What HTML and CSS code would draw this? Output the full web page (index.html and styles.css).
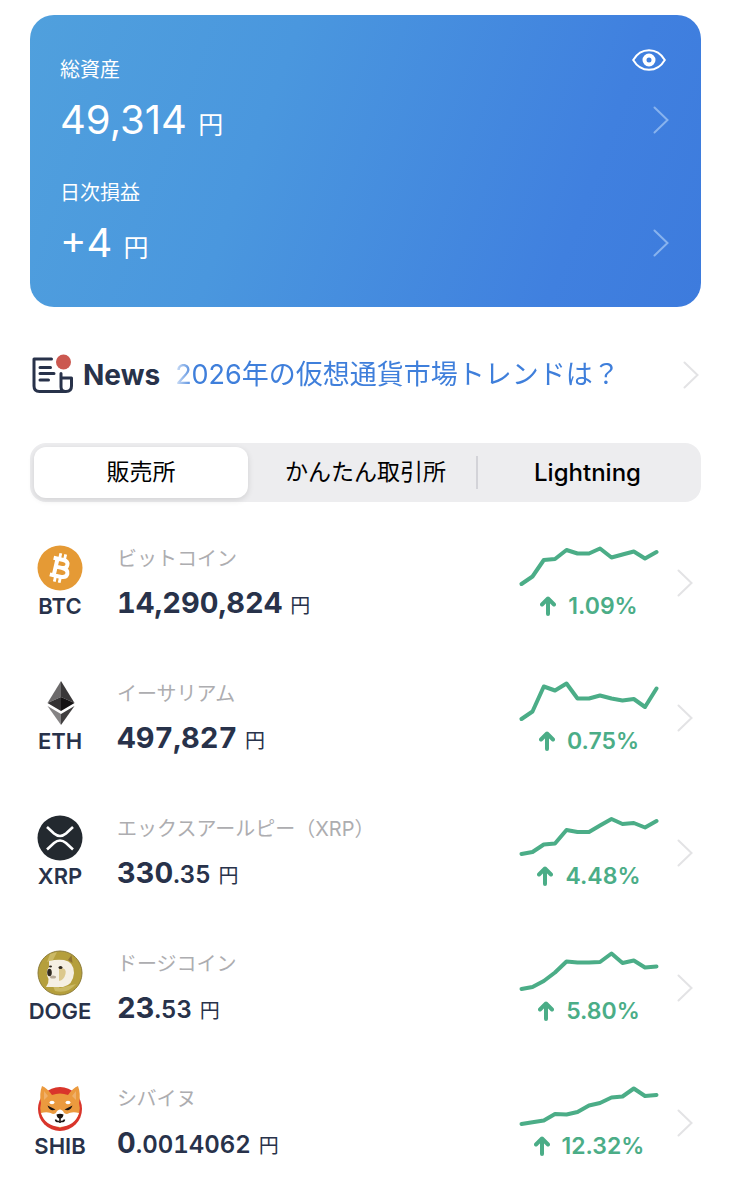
FILE: index.html
```html
<!DOCTYPE html>
<html lang="ja">
<head>
<meta charset="utf-8">
<meta name="viewport" content="width=device-width, initial-scale=1">
<title>販売所</title>
<link rel="stylesheet" href="styles.css">
</head>
<body>
<svg class="defs" aria-hidden="true">
  <symbol id="chevron" viewBox="0 0 16 28"><path d="M1.5 1.5 14.5 14 1.5 26.5"/></symbol>
  <symbol id="up" viewBox="0 0 16 20"><path d="M8 18V2.500M2 8.500 8 2.500l6 6"/></symbol>
</svg>
<main class="page">
  <section class="card">
    <button class="eye" type="button" aria-label="資産の表示切替">
      <svg viewBox="0 0 34 22"><path class="eye-line" d="M1.200 11C5 4.500 10.500 1.200 17 1.200S29 4.500 32.800 11C29 17.500 23.500 20.800 17 20.800S5 17.500 1.200 11Z"/><circle class="eye-ring" cx="17" cy="11" r="4.500"/></svg>
    </button>
    <a class="asset" href="#assets">
      <span class="asset-label">総資産</span>
      <span class="asset-row"><span class="asset-value">49,314 <small>円</small></span><svg class="chevron"><use href="#chevron"/></svg></span>
    </a>
    <a class="asset" href="#daily">
      <span class="asset-label">日次損益</span>
      <span class="asset-row"><span class="asset-value">+4 <small>円</small></span><svg class="chevron"><use href="#chevron"/></svg></span>
    </a>
  </section>

  <a class="news" href="#news">
    <svg class="news-icon" viewBox="0 0 44 44" aria-hidden="true">
      <path class="news-lines" d="M21.500 6H4V33Q4 38.500 9.500 38.500H36Q41.500 38.500 41.500 33V25H31M31 20.500V34Q31 38.500 35.500 38.500M10 14.500H20.500M10 20.500H24M10 27H18.500"/>
      <circle class="news-dot" cx="33.500" cy="9" r="7.500"/>
    </svg>
    <strong class="news-title">News</strong>
    <span class="news-text">2026年の仮想通貨市場トレンドは？</span>
    <svg class="chevron"><use href="#chevron"/></svg>
  </a>

  <div class="tabs" role="radiogroup" aria-label="取引方法">
    <label class="tab"><input type="radio" name="market" checked><span>販売所</span></label>
    <label class="tab"><input type="radio" name="market"><span>かんたん取引所</span></label>
    <label class="tab"><input type="radio" name="market"><span lang="en">Lightning</span></label>
  </div>

  <ul class="coins">
    <li><a class="coin" href="#btc">
      <span class="coin-id"><svg class="coin-icon" viewBox="0 0 46 46" aria-hidden="true"><circle cx="23" cy="23" r="22.500" fill="#e59a35"/><g transform="rotate(13 23 23)" fill="none" stroke="#fff"><path stroke-width="4" d="M18.500 14V32M14.500 14.500H24.500Q29.500 14.500 29.500 18.500T24.500 22.500H19M24.500 22.500Q31.500 22.500 31.500 27T25 31.500H14.500"/><path stroke-width="2.800" d="M20.500 8.500V15M25.500 8.500V15M20.500 31V37.500M25.500 31V37.500"/></g></svg><b>BTC</b></span>
      <span class="coin-info"><span class="coin-name">ビットコイン</span><span class="price">14,290,824 <small>円</small></span></span>
      <span class="trend"><svg class="spark" viewBox="0 0 140 42" aria-hidden="true"><path d="M2.500 39 13.500 31.500 24.800 15 36 14 47.500 5 58.500 8.500H70L81 3.500 92.500 12.500 103.500 9.500 114.800 6.500 126 13.500 137.500 7"/></svg><span class="change"><svg class="up"><use href="#up"/></svg>1.09%</span></span>
      <svg class="chevron"><use href="#chevron"/></svg>
    </a></li>
    <li><a class="coin" href="#eth">
      <span class="coin-id"><svg class="coin-icon" viewBox="0 0 46 46" aria-hidden="true"><path fill="#6c6a6b" d="M24 1 10.500 23 24 17Z"/><path fill="#3a3839" d="M24 1 37.500 23 24 17Z"/><path fill="#343233" d="M10.500 23 24 17V31Z"/><path fill="#151314" d="M37.500 23 24 17V31Z"/><path fill="#858384" d="M10.500 26 24 34V45Z"/><path fill="#403e3f" d="M37.500 26 24 34V45Z"/></svg><b>ETH</b></span>
      <span class="coin-info"><span class="coin-name">イーサリアム</span><span class="price">497,827 <small>円</small></span></span>
      <span class="trend"><svg class="spark" viewBox="0 0 140 42" aria-hidden="true"><path d="M2.500 39 13.500 31.500 24.800 6.500 36 10.500 47.500 3.500 58.500 18.500H70L81 15.500 92.500 18.500 103.500 20.500 114.800 19 126 27 137.500 8.500"/></svg><span class="change"><svg class="up"><use href="#up"/></svg>0.75%</span></span>
      <svg class="chevron"><use href="#chevron"/></svg>
    </a></li>
    <li><a class="coin" href="#xrp">
      <span class="coin-id"><svg class="coin-icon" viewBox="0 0 46 46" aria-hidden="true"><circle cx="23" cy="23" r="22.500" fill="#23292f"/><path fill="none" stroke="#fff" stroke-width="2.600" d="M10 12 17 18.500Q23 23.500 29 18.500L36 12M10 34.500 17 28Q23 23 29 28L36 34.500"/></svg><b>XRP</b></span>
      <span class="coin-info"><span class="coin-name">エックスアールピー（XRP）</span><span class="price">330<i>.35</i> <small>円</small></span></span>
      <span class="trend"><svg class="spark" viewBox="0 0 140 42" aria-hidden="true"><path d="M2.500 39 13.500 37 24.800 29.500 36 28.500 47.500 15 58.500 17H70L81 10.500 92.500 4 103.500 9 114.800 8 126 12.500 137.500 6"/></svg><span class="change"><svg class="up"><use href="#up"/></svg>4.48%</span></span>
      <svg class="chevron"><use href="#chevron"/></svg>
    </a></li>
    <li><a class="coin" href="#doge">
      <span class="coin-id"><svg class="coin-icon" viewBox="0 0 46 46" aria-hidden="true"><circle cx="23" cy="23" r="22" fill="#b59f3c" stroke="#8d7c39"/><path fill="#cbb965" d="M14 31 23 38 39 34Q31 44 18 41ZM13 4 20 2 16 10 10 12Z"/><path fill="#8f7233" d="M31 10 34.500 5 35.500 13Z"/><path fill="#f5efe3" d="M12 11Q20 9 27 10Q37 12 37 23Q36 35 26 37H9Q12 33 11.500 29Q8 22 12 17Z"/><path fill="#dcc88c" d="M22 18Q30 17 28.500 24Q27 30 22 31Z"/><ellipse cx="12.500" cy="22.500" rx="2.300" ry="3.800" fill="#30291f"/><ellipse cx="16" cy="27" rx="3" ry="1.500" fill="#b8aa98"/><ellipse cx="13.500" cy="16.500" rx="1.500" ry="1" fill="#30291f"/><ellipse cx="23.500" cy="17.500" rx="2" ry="1.500" fill="#30291f"/></svg><b>DOGE</b></span>
      <span class="coin-info"><span class="coin-name">ドージコイン</span><span class="price">23<i>.53</i> <small>円</small></span></span>
      <span class="trend"><svg class="spark" viewBox="0 0 140 42" aria-hidden="true"><path d="M2.500 39 13.500 37 24.800 31 36 22.500 47.500 11.500 58.500 12.500H70L81 12 92.500 3.500 103.500 13 114.800 10.500 126 17.500 137.500 16.500"/></svg><span class="change"><svg class="up"><use href="#up"/></svg>5.80%</span></span>
      <svg class="chevron"><use href="#chevron"/></svg>
    </a></li>
    <li><a class="coin" href="#shib">
      <span class="coin-id"><svg class="coin-icon" viewBox="0 0 46 46" aria-hidden="true"><circle cx="23" cy="24" r="22" fill="#d9352b"/><path fill="#eb9a3e" d="M5 1Q10 3 15 10Q23 7 31 10Q36 3 41 1Q44 9 42 18Q45 29 37 36L23 43 9 36Q1 29 4 18Q2 9 5 1Z"/><path fill="#f0b06a" d="M7 6 11 11 7 15ZM39 6 35 11 39 15Z"/><path fill="#fff" d="M4 28Q11 26 16 29Q19 29 20 26Q23 23 26 26Q27 29 30 29Q35 26 42 28Q38 41 23 42Q8 41 4 28Z"/><ellipse cx="15" cy="17.500" rx="2.500" ry="1.700" fill="#fff"/><ellipse cx="31" cy="17.500" rx="2.500" ry="1.700" fill="#fff"/><path fill="#1c1512" d="M10.500 20.500 18.500 24.500Q13 27 10.500 20.500ZM35.500 20.500 27.500 24.500Q33 27 35.500 20.500ZM19.500 29.500Q23 28 26.500 29.500 26 33 23.800 33.500V36H22.200V33.500Q20 33 19.500 29.500Z"/><path fill="none" stroke="#1c1512" stroke-width="1.500" d="M18.500 34.500Q19 37 22 36.500Q23 38 24 36.500Q27 37 27.500 34.500"/></svg><b>SHIB</b></span>
      <span class="coin-info"><span class="coin-name">シバイヌ</span><span class="price">0<i>.0014062</i> <small>円</small></span></span>
      <span class="trend"><svg class="spark" viewBox="0 0 140 42" aria-hidden="true"><path d="M2.500 39 13.500 37.200 24.800 35.500 36 29 47.500 29.500 58.500 27 70 20.500 81 18 92.500 12.500 103.500 11.500 114.800 3.500 126 11 137.500 10"/></svg><span class="change"><svg class="up"><use href="#up"/></svg>12.32%</span></span>
      <svg class="chevron"><use href="#chevron"/></svg>
    </a></li>
  </ul>
</main>
</body>
</html>
```
FILE: styles.css
```css
* { box-sizing: border-box; }
body {
  margin: 0;
  background: #fff;
  color: #28324a;
  font-family: Inter, "Noto Sans CJK JP", sans-serif;
}
a { color: inherit; text-decoration: none; }
svg { display: block; flex: none; }
.defs { position: absolute; width: 0; height: 0; }
.page { padding: 15px 30px 0; }
.chevron {
  width: 16px;
  height: 28px;
  fill: none;
  stroke: #e3e3e5;
  stroke-width: 2;
  stroke-linecap: round;
}

.card {
  position: relative;
  display: flex;
  flex-direction: column;
  gap: 34px;
  padding: 40px 32px 40px 30px;
  border-radius: 24px;
  background: linear-gradient(110deg, #50a0dd 0%, #4a97de 35%, #4080df 80%, #3d7bdd 100%);
  color: #fff;
}
.card .chevron { stroke: #88b3ee; }
.eye {
  position: absolute;
  top: 34px;
  right: 35px;
  padding: 0;
  border: 0;
  background: none;
}
.eye svg { width: 34px; height: 22px; fill: none; stroke: #fff; }
.eye-line { stroke-width: 2; }
.eye-ring { stroke-width: 4; }
.asset { display: flex; flex-direction: column; gap: 11px; }
.asset-label { font-size: 20px; line-height: 30px; }
.asset-row { display: flex; align-items: center; justify-content: space-between; }
.asset-value { font-size: 40px; line-height: 48px; }
.asset-value small { font-size: 25px; line-height: 1; }

.news {
  display: flex;
  align-items: center;
  margin: 46px 0;
  padding-right: 2px;
  height: 44px;
}
.news-icon { width: 44px; height: 44px; }
.news-lines { fill: none; stroke: #28324a; stroke-width: 3; stroke-linecap: round; stroke-linejoin: round; }
.news-dot { fill: #cb5850; }
.news-title { margin-left: 9px; font-size: 28px; line-height: 40px; }
.news-text {
  flex: 1;
  min-width: 0;
  margin: 0 18px 0 10px;
  padding-left: 5px;
  overflow: hidden;
  white-space: nowrap;
  color: #3f7fdb;
  font-size: 27px;
  line-height: 40px;
  -webkit-mask-image: linear-gradient(90deg, transparent, #000 24px);
  mask-image: linear-gradient(90deg, transparent, #000 24px);
}

.tabs {
  display: grid;
  grid-template-columns: repeat(3, 1fr);
  padding: 4px;
  border-radius: 16px;
  background: #ededef;
}
.tab {
  position: relative;
  display: flex;
  color: #000;
  font-size: 23px;
  line-height: 51px;
  text-align: center;
}
.tab input { position: absolute; inset: 0; margin: 0; opacity: 0; }
.tab span { flex: 1; border-radius: 12px; }
.tab span:lang(en) { font-size: 24px; font-weight: 500; }
.tab input:checked + span { margin-right: 7px; background: #fff; box-shadow: 0 2px 6px #0000001f; }
.tab:last-child::before {
  content: "";
  align-self: center;
  width: 2px;
  height: 33px;
  background: #d3d3d8;
}

.coins { margin: 15px 0 0; padding: 0; list-style: none; }
.coin {
  display: grid;
  grid-template-columns: 60px 1fr 140px 34px;
  align-items: start;
  padding: 28px 8px 31px 0;
}
.coin .chevron { align-self: center; justify-self: end; }
.coin-id { display: flex; flex-direction: column; align-items: center; }
.coin-icon { width: 46px; height: 46px; }
.coin-id b { font-size: 22px; line-height: 30px; font-weight: 600; }
.coin-info { display: flex; flex-direction: column; gap: 16px; padding-left: 27px; line-height: 28px; }
.coin-name { color: #adadb0; font-size: 20px; }
.price { font-size: 29px; font-weight: 700; font-variant-numeric: tabular-nums; }
.price i { font-size: 24px; font-style: normal; font-weight: 600; }
.price small { font-size: 20px; line-height: 1; font-weight: 400; }
.trend { display: flex; flex-direction: column; align-items: center; gap: 5px; color: #4bad87; }
.spark, .up { fill: none; stroke: #4bad87; stroke-linecap: round; stroke-linejoin: round; }
.spark { width: 140px; height: 42px; stroke-width: 4; }
.up { width: 16px; height: 20px; stroke-width: 4; }
.change { display: flex; align-items: center; gap: 12px; font-size: 23px; line-height: 28px; font-weight: 600; }
```
